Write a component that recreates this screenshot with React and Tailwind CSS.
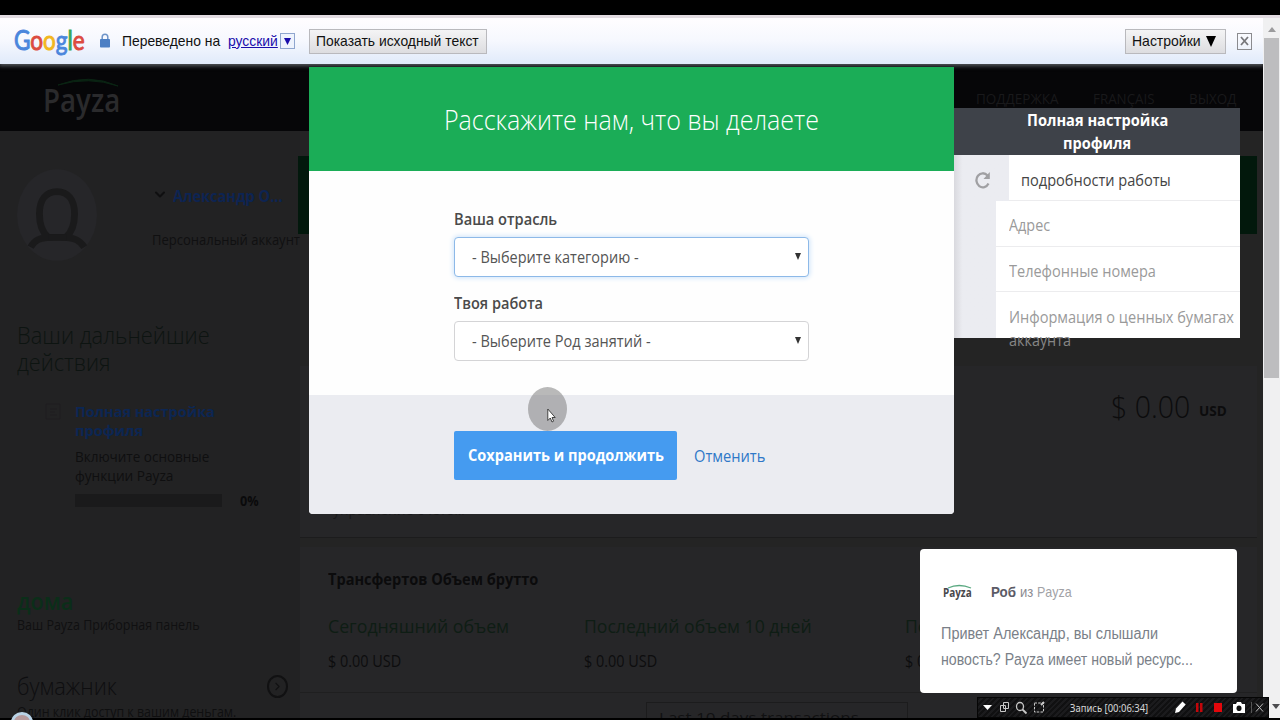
import { useLayoutEffect, useRef, useState } from 'react';
import { FiChevronDown, FiChevronRight } from 'react-icons/fi';

// Squeezes one line of text to the width of its box
function Fit({ className = '', textClass = '', children }) {
  const box = useRef(null);
  const text = useRef(null);
  const [scale, setScale] = useState(1);

  useLayoutEffect(() => {
    setScale(box.current.clientWidth / text.current.offsetWidth);
  }, []);

  return (
    <div ref={box} className={`shrink-0 whitespace-nowrap ${className}`}>
      <span ref={text} className={`inline-block origin-left ${textClass}`} style={{ transform: `scaleX(${scale})` }}>
        {children}
      </span>
    </div>
  );
}

function TranslateBar() {
  return (
    <div className="relative z-10 flex h-[49px] shrink-0 items-center border-t-[3px] border-[#e2dbe1] bg-linear-to-b from-[#fffdff] via-[#f6f8fe] to-[#e0eafa] pl-[14px] pr-[11px] font-['Liberation_Sans',sans-serif] text-[15px] text-[#111] shadow-[0_1px_4px_1px_#55595f]">
      <Fit className="-mt-[2px] w-[71px] font-['Lato',sans-serif] text-[26px] leading-[34px] [-webkit-text-stroke:0.9px_currentColor]">
        <span className="text-[#4a86dc]">G</span>
        <span className="text-[#dc4b40]">o</span>
        <span className="text-[#f2b71f]">o</span>
        <span className="text-[#4a86dc]">g</span>
        <span className="text-[#3aa757]">l</span>
        <span className="text-[#dc4b40]">e</span>
      </Fit>
      <svg className="ml-[15px] -mt-px h-[15px] w-[10px]" viewBox="0 0 10 15">
        <path d="M2.2 7V4a2.8 2.8 0 0 1 5.6 0v3" fill="none" stroke="#6f94c8" strokeWidth="1.5" />
        <rect y="6" width="10" height="8.5" rx="0.8" fill="#4c7fc4" />
      </svg>
      <Fit className="ml-[12px] w-[98px]">Переведено на</Fit>
      <Fit className="ml-[8px] w-[50px] text-[#1a0dab]" textClass="underline">
        русский
      </Fit>
      <div className="ml-[2px] flex h-[16px] w-[15px] items-center justify-center border border-[#8fa6cf] bg-[#eef3fd]">
        <svg className="h-[7px] w-[7px]" viewBox="0 0 7 7">
          <path d="M0 0h7L3.5 7z" fill="#1a0dab" />
        </svg>
      </div>
      <button className="ml-[14px] flex h-[25px] w-[178px] items-center border border-[#b9b9bd] bg-linear-to-b from-[#f4f4f5] to-[#dddde0] pl-[6px]">
        <Fit className="w-[163px]">Показать исходный текст</Fit>
      </button>
      <button className="ml-auto flex h-[25px] w-[101px] items-center border border-[#b9b9bd] bg-linear-to-b from-[#f4f4f5] to-[#dddde0] pl-[6px]">
        <Fit className="w-[69px]">Настройки</Fit>
        <svg className="ml-[5px] h-[11px] w-[10px]" viewBox="0 0 10 11">
          <path d="M0 0h10L5 11z" fill="#000" />
        </svg>
      </button>
      <button className="ml-[11px] flex h-[17px] w-[15px] items-center justify-center border border-[#8b8b8f]">
        <svg className="h-[10px] w-[9px]" viewBox="0 0 9 10">
          <path d="M1 1l7 8M8 1L1 9" stroke="#77777b" strokeWidth="1.8" />
        </svg>
      </button>
    </div>
  );
}

function SiteHeader() {
  return (
    <div className="flex h-[67px] shrink-0 bg-[#060608] pl-[43px]">
      <div className="relative pt-[14px]">
        <svg className="absolute left-[14px] top-[14px] h-[9px] w-[62px]" viewBox="0 0 62 9">
          <path d="M1 7Q32-5 61 8Q32-2 1 7z" fill="#0a2413" stroke="#0a2413" />
        </svg>
        <Fit className="w-[77px] text-[32px] font-semibold leading-[44px] text-[#2a2a2c]">Payza</Fit>
      </div>
      <div className="ml-auto flex pr-[27px] pt-[25px] text-[14px] leading-[20px] text-[#19191b]">
        <Fit className="w-[83px]">ПОДДЕРЖКА</Fit>
        <Fit className="ml-[34px] w-[62px]">FRANÇAIS</Fit>
        <Fit className="ml-[34px] w-[47px]">ВЫХОД</Fit>
      </div>
    </div>
  );
}

function Sidebar() {
  return (
    <div className="w-[300px] shrink-0 bg-[#222223] pl-[17px]">
      <div className="flex h-[133px] pt-[37px]">
        <svg className="h-[95px] w-[82px]" viewBox="0 0 82 95">
          <ellipse cx="41" cy="47" rx="41" ry="47" fill="#262629" />
          <path d="M14 80c5-9 11-9 18-10c-6-5-9-14-9-24c0-15 7-23 18-23s18 8 18 23c0 10-3 19-9 24c7 1 13 1 19 10" fill="none" stroke="#1a1a1b" strokeWidth="7" />
          <path d="M32 70h19" stroke="#1a1a1b" strokeWidth="7" />
        </svg>
        <div className="ml-[55px]">
          <div className="flex items-center pt-[18px] text-[16px] font-bold leading-[20px] text-[#0d2452]">
            <FiChevronDown className="-mt-[4px] h-[17px] w-[16px] text-[#0f0f10]" strokeWidth={3} />
            <Fit className="ml-[5px] w-[110px]">Александр О...</Fit>
          </div>
          <Fit className="mt-[24px] w-[148px] text-[14.5px] leading-[20px] text-[#101011]">Персональный аккаунт</Fit>
        </div>
      </div>
      <div className="mt-[57px] text-[24px] font-light leading-[27px] text-[#0d1411]">
        <Fit className="w-[193px]">Ваши дальнейшие</Fit>
        <Fit className="w-[94px]">действия</Fit>
      </div>
      <div className="mt-[27px] flex">
        <svg className="mt-[1px] ml-[28px] h-[17px] w-[16px]" viewBox="0 0 16 17">
          <path d="M1 1h14v15H1zM5 6h7M5 9h5M5 12h7" fill="none" stroke="#1e1d20" />
        </svg>
        <div className="ml-[14px]">
          <div className="text-[15px] font-bold leading-[19px] text-[#0c2653]">
            <Fit className="w-[140px]">Полная настройка</Fit>
            <Fit className="w-[68px]">профиля</Fit>
          </div>
          <div className="mt-[7px] text-[14.5px] leading-[19px] text-[#0f0f10]">
            <Fit className="w-[134px]">Включите основные</Fit>
            <Fit className="w-[98px]">функции Payza</Fit>
          </div>
          <div className="mt-[5px] flex items-center">
            <div className="h-[13px] w-[147px] bg-[#1a1a1b]" />
            <Fit className="ml-[18px] mt-[2px] w-[19px] text-[14px] font-bold leading-[18px] text-[#0a0a0b]">0%</Fit>
          </div>
        </div>
      </div>
      <Fit className="mt-[76px] w-[56px] text-[24px] font-semibold leading-[30px] text-[#0b2e19]">дома</Fit>
      <Fit className="w-[183px] text-[14px] leading-[18px] text-[#101011]">Ваш Payza Приборная панель</Fit>
      <div className="mt-[37px] flex items-center">
        <Fit className="w-[100px] text-[24px] font-light leading-[30px] text-[#0e0e10]">бумажник</Fit>
        <div className="ml-[150px] flex h-[23px] w-[21px] items-center justify-center rounded-[50%] border-2 border-[#111112] text-[#111112]">
          <FiChevronRight size={13} />
        </div>
      </div>
      <Fit className="mt-px w-[219px] text-[14px] leading-[20px] text-[#0f0f10]">Один клик доступ к вашим деньгам.</Fit>
    </div>
  );
}

function Volume({ label, labelWidth, className = '' }) {
  return (
    <div className={className}>
      <Fit className={`text-[19px] leading-[26px] text-[#0e1d14] ${labelWidth}`}>{label}</Fit>
      <Fit className="mt-[12px] w-[73px] text-[16px] leading-[20px] text-[#0d0d0e]">$ 0.00 USD</Fit>
    </div>
  );
}

function Dashboard() {
  return (
    <div className="flex flex-1 flex-col bg-[#242424] pr-[6px] pt-[25px]">
      <div className="-ml-[2px] h-[78px] shrink-0 bg-[#02180c]" />
      <div className="mt-[132px] flex h-[172px] shrink-0 flex-col border-b border-[#1c1c1d] bg-[#262628]">
        <div className="ml-auto flex items-center pr-[30px] pt-[22px] text-[#0c0c0d]">
          <Fit className="w-[79px] text-[31px] font-light leading-[36px]">$ 0.00</Fit>
          <Fit className="ml-[9px] mt-[8px] w-[28px] text-[15px] font-bold leading-[20px]">USD</Fit>
        </div>
        <Fit className="mt-auto mb-[17px] ml-[33px] w-[132px] text-[14px] leading-[20px] text-[#19191a]">управление счетом</Fit>
      </div>
      <div className="mt-[9px] flex-1 bg-[#262628]">
        <Fit className="ml-[28px] w-[210px] pt-[21px] text-[16px] font-bold leading-[22px] text-[#0b0b0c]">
          Трансфертов Объем брутто
        </Fit>
        <div className="mt-[23px] flex pl-[28px]">
          <Volume label="Сегодняшний объем" labelWidth="w-[181px]" className="w-[256px]" />
          <Volume label="Последний объем 10 дней" labelWidth="w-[228px]" className="w-[321px]" />
          <Volume label="Последний объем 30 дней" labelWidth="w-[228px]" />
        </div>
        <div className="mt-[21px] border-t border-[#1f1f20]" />
        <div className="ml-[346px] mt-[9px] h-[30px] w-[262px] border border-[#1c1c1d] pl-[12px] pt-[3px]">
          <Fit className="w-[200px] text-[15px] leading-[22px] text-[#111112]">Last 10 days transactions</Fit>
        </div>
      </div>
    </div>
  );
}

function Scrollbar() {
  return (
    <div className="mt-[3px] flex w-[17px] shrink-0 flex-col items-center bg-[#f0f0f1] pt-[9px]">
      <svg className="h-[5px] w-[8px]" viewBox="0 0 8 5">
        <path d="M0 5L4 0l4 5z" fill="#9b9b9d" />
      </svg>
      <div className="mt-[6px] h-[340px] w-[15px] bg-[#bdbdbf]" />
      <svg className="mt-auto mb-[9px] ml-[9px] h-[5px] w-[8px]" viewBox="0 0 8 5">
        <path d="M0 0h8L4 5z" fill="#4b4b4e" />
      </svg>
    </div>
  );
}

const select = 'flex h-[40px] w-[355px] items-center rounded-[4px] border bg-white pl-[17px] pr-[7px] text-[16.5px] text-[#555]';

function Arrow() {
  return (
    <svg className="ml-auto -mt-[2px] h-[7px] w-[6px]" viewBox="0 0 6 7">
      <path d="M0 0h6L3 7z" fill="#333" />
    </svg>
  );
}

function WorkModal() {
  return (
    <div className="absolute left-[309px] top-[67px] z-20 flex h-[447px] w-[645px] flex-col overflow-hidden rounded-b-[4px] bg-[#fefefe]">
      <div className="flex h-[104px] items-center justify-center bg-[#1bad57] text-[28px] font-light text-white">
        <Fit className="w-[375px]">Расскажите нам, что вы делаете</Fit>
      </div>
      <div className="h-[224px] pl-[145px] pt-[37px] text-[16.5px] font-semibold leading-[22px] text-[#4a4a4a]">
        <Fit className="w-[103px]">Ваша отрасль</Fit>
        <div className={`mt-[7px] border-[#8db9e8] font-normal shadow-[0_0_5px_1px_#cfe4fa] ${select}`}>
          <Fit className="w-[167px]">- Выберите категорию -</Fit>
          <Arrow />
        </div>
        <Fit className="mt-[15px] w-[89px]">Твоя работа</Fit>
        <div className={`mt-[7px] border-[#d4d4d6] font-normal ${select}`}>
          <Fit className="w-[179px]">- Выберите Род занятий -</Fit>
          <Arrow />
        </div>
      </div>
      <div className="flex flex-1 items-start bg-[#ebecf1] pl-[145px] pt-[36px] text-[16.5px]">
        <button className="flex h-[49px] w-[223px] items-center justify-center rounded-[2px] bg-[#459bf0] font-bold text-white">
          <Fit className="w-[196px]">Сохранить и продолжить</Fit>
        </button>
        <Fit className="ml-[17px] w-[71px] leading-[49px] text-[#2f78c8]">Отменить</Fit>
      </div>
    </div>
  );
}

function ProfileSteps() {
  return (
    <div className="absolute left-[954px] top-[108px] z-10 w-[286px] text-[16.5px]">
      <div className="flex h-[47px] flex-col items-center bg-[#3e4249] font-bold leading-[23px] text-white">
        <Fit className="w-[141px]">Полная настройка</Fit>
        <Fit className="w-[68px]">профиля</Fit>
      </div>
      <div className="flex h-[183px] bg-linear-to-r from-[#d9d9de] via-[#ebecf1] via-3% to-[#ebecf1] text-[#9a9a9a]">
        <div className="w-[42px] pl-[20px] pt-[16px]">
          <svg className="h-[18px] w-[17px]" viewBox="0 0 17 18">
            <path d="M14.500 12.500A6.400 7 0 1 1 13.500 4.500" fill="none" stroke="#a0a0a3" strokeWidth="2.3" />
            <path d="M15.800 1v7H9.500z" fill="#a0a0a3" />
          </svg>
        </div>
        <div className="flex-1">
          <div className="ml-[13px] h-[46px] border-b border-[#ececee] bg-white pl-[12px] leading-[49px] text-[#444]">
            <Fit className="w-[150px]">подробности работы</Fit>
          </div>
          <div className="h-[46px] border-b border-[#ececee] bg-white pl-[13px] leading-[48px]">
            <Fit className="w-[41px]">Адрес</Fit>
          </div>
          <div className="h-[45px] border-b border-[#ececee] bg-white pl-[13px] leading-[48px]">
            <Fit className="w-[147px]">Телефонные номера</Fit>
          </div>
          <div className="h-[46px] bg-white pl-[13px] pt-[13px] leading-[24px]">
            <Fit className="w-[225px]">Информация о ценных бумагах</Fit>
            <Fit className="-mt-px w-[62px] text-[#868686]">аккаунта</Fit>
          </div>
        </div>
      </div>
    </div>
  );
}

function ChatPopup() {
  return (
    <div className="absolute left-[920px] top-[549px] z-10 h-[144px] w-[317px] rounded-[4px] bg-white pl-[21px] pt-[33px] font-['Liberation_Sans',sans-serif]">
      <div className="flex items-center leading-[20px]">
        <div className="relative ml-[2px] font-['Open_Sans',sans-serif]">
          <svg className="absolute left-[4px] top-[2px] h-[5px] w-[25px]" viewBox="0 0 25 5">
            <path d="M1 4Q12-1 24 4" fill="none" stroke="#5aa981" strokeWidth="1.3" />
          </svg>
          <Fit className="w-[29px] text-[13px] font-bold text-[#48484c]">Payza</Fit>
        </div>
        <Fit className="ml-[19px] w-[25px] text-[15px] font-bold text-[#5b5b66]">Роб</Fit>
        <Fit className="ml-[4px] w-[13px] text-[15px] text-[#8a8a90]">из</Fit>
        <Fit className="ml-[4px] w-[35px] text-[15px] text-[#a2a2a6]">Payza</Fit>
      </div>
      <div className="mt-[19px] text-[16px] leading-[26px] text-[#7a7f88]">
        <Fit className="w-[217px]">Привет Александр, вы слышали</Fit>
        <Fit className="w-[252px]">новость? Payza имеет новый ресурс...</Fit>
      </div>
    </div>
  );
}

function RecorderBar() {
  return (
    <div className="absolute left-[977px] top-[697px] z-20 flex h-[21px] w-[292px] items-center border border-[#050505] bg-[repeating-linear-gradient(135deg,#101011_0_2px,#1b1b1d_2px_4px)] font-['Noto_Sans',sans-serif] text-[11.5px] text-[#d8d8d8]">
      <svg className="h-[19px] w-[80px]" viewBox="0 0 80 19" fill="none" stroke="#c8c8c8">
        <path d="M5 7h9l-4.500 5z" fill="#fff" stroke="none" />
        <path d="M25.500 4.500h5v6h-5zM22.500 7.500h5v6h-5z" />
        <ellipse cx="42" cy="8.500" rx="3.500" ry="4" strokeWidth="1.3" />
        <path d="M44.500 11.500l4 4" strokeWidth="1.8" />
        <path d="M56.500 5h9v9h-9z" strokeDasharray="2.5 1.2" />
        <path d="M63 7l3-3" strokeWidth="2" />
      </svg>
      <Fit className="ml-[12px] w-[78px]">Запись [00:06:34]</Fit>
      <svg className="ml-[22px] h-[19px] w-[96px]" viewBox="0 0 96 19">
        <path d="M5 15l1-4.500L12.500 3.500l3.200 3L9 14z" fill="#fff" />
        <path d="M26 5h2.500v9H26zM30 5h2.500v9H30z" fill="#c4060a" />
        <path d="M44 5h8v9h-8z" fill="#e3070b" />
        <path d="M63 6h3l1-2h4l1 2h3v9H63z" fill="#fff" />
        <ellipse cx="69" cy="10.2" rx="2.5" ry="2.8" fill="#111" />
        <path d="M81.500 4v11" stroke="#555" />
        <path d="M86 5.500l7 8M93 5.500l-7 8" stroke="#c0c0c0" />
      </svg>
    </div>
  );
}

function Pointer() {
  return (
    <div className="absolute left-[528px] top-[387px] z-30 h-[44px] w-[39px] rounded-[50%] bg-[#808080]/55">
      <svg className="absolute left-[19px] top-[21px] h-[15px] w-[9px]" viewBox="0 0 9 15">
        <path d="M.8 1v11.500l2.500-2.500 1.700 4 1.600-.8L5 9.500h3.200z" fill="#fff" stroke="#333" strokeWidth=".9" />
      </svg>
    </div>
  );
}

export default function App() {
  return (
    <div className="relative flex h-[720px] w-[1280px] flex-col overflow-hidden bg-black pt-[15px] font-['Open_Sans',sans-serif]">
      <div className="flex h-[703px] shrink-0 overflow-hidden bg-[#e2dbe1]">
        <div className="flex w-[1263px] flex-col overflow-hidden">
          <TranslateBar />
          <SiteHeader />
          <div className="flex min-h-0 flex-1">
            <Sidebar />
            <Dashboard />
          </div>
        </div>
        <Scrollbar />
      </div>
      <ProfileSteps />
      <WorkModal />
      <ChatPopup />
      <RecorderBar />
      <Pointer />
      <div className="absolute left-[11px] top-[712px] z-20 h-[20px] w-[22px] rounded-[50%] border-3 border-[#b9d3e6] bg-[#b59a9c]" />
    </div>
  );
}
